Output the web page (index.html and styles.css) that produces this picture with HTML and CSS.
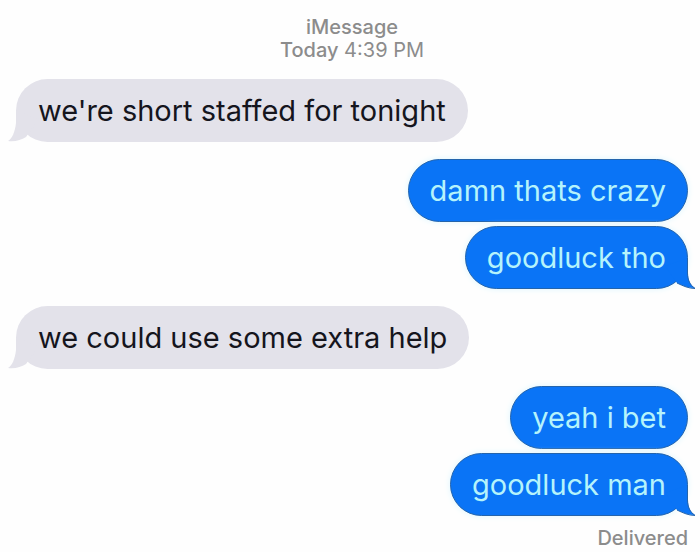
FILE: index.html
```
<!DOCTYPE html>
<html lang="en">
<head>
    <meta charset="UTF-8">
    <meta name="viewport" content="width=device-width, initial-scale=1.0">
    <title>iMessage</title>
    <link rel="stylesheet" href="styles.css">
</head>
<body>
    <main class="chat">
        <header class="chat-header">
            <p class="service">iMessage</p>
            <p><span class="day">Today</span> <time>4:39 PM</time></p>
        </header>

        <div class="group received">
            <p class="bubble">we're short staffed for tonight
                <svg class="tail" viewBox="0 0 40 31" aria-hidden="true">
                    <path class="tail-fill" d="M31 0V12C32 21 35 28 39 30C32 31 26 29 21 26L8 8Z"/>
                </svg>
            </p>
        </div>

        <div class="group sent">
            <p class="bubble">damn thats crazy</p>
            <p class="bubble">goodluck tho
                <svg class="tail" viewBox="0 0 40 31" aria-hidden="true">
                    <path class="tail-fill" d="M31 0V15C31 22 33 27 38 30C32 30 26 28 20 25L8 8Z"/>
                    <path class="tail-line" d="M30.500 0V15C30.500 22 33 27 38 30.500C32 30.500 26 28 20 25"/>
                </svg>
            </p>
        </div>

        <div class="group received">
            <p class="bubble">we could use some extra help
                <svg class="tail" viewBox="0 0 40 31" aria-hidden="true">
                    <path class="tail-fill" d="M31 0V12C32 21 35 28 39 30C32 31 26 29 21 26L8 8Z"/>
                </svg>
            </p>
        </div>

        <div class="group sent">
            <p class="bubble">yeah i bet</p>
            <p class="bubble">goodluck man
                <svg class="tail" viewBox="0 0 40 31" aria-hidden="true">
                    <path class="tail-fill" d="M31 0V15C31 22 33 27 38 30C32 30 26 28 20 25L8 8Z"/>
                    <path class="tail-line" d="M30.500 0V15C30.500 22 33 27 38 30.500C32 30.500 26 28 20 25"/>
                </svg>
            </p>
        </div>

        <p class="status">Delivered</p>
    </main>
</body>
</html>
```
FILE: styles.css
```
* {
    margin: 0;
    padding: 0;
    box-sizing: border-box;
}

body {
    font-family: 'Inter', 'Liberation Sans', sans-serif;
    background: #fefefe;
    color: #15151d;
}

.chat {
    padding: 16px 12px 0 16px;
}

.chat-header {
    margin-bottom: 17px;
    text-align: center;
    font-size: 20px;
    line-height: 23px;
    color: #8c8c8c;
}

.service,
.day {
    font-weight: 500;
}

.group {
    display: flex;
    flex-direction: column;
    gap: 4px;
    margin-bottom: 17px;
}

.received {
    align-items: flex-start;
}

.sent {
    align-items: flex-end;
}

.bubble {
    position: relative;
    padding: 16px 22px;
    border-radius: 32px;
    font-size: 29px;
    line-height: 31px;
}

.received .bubble {
    background: #e3e2ea;
}

.sent .bubble {
    padding: 15px 21px;
    border: 1px solid #2464ac;
    background: #0a74f6;
    color: #b5f3fb;
    box-shadow: 0 0 6px #dcf6ff;
}

/* Tail in the bottom corner of the last bubble */
.tail {
    position: absolute;
    right: -9px;
    bottom: 0;
    width: 40px;
    height: 31px;
}

.sent .tail {
    right: -10px;
    bottom: -1px;
}

.received .tail {
    right: auto;
    left: -9px;
    transform: scaleX(-1);
}

.received .tail-fill {
    fill: #e3e2ea;
}

.sent .tail-fill {
    fill: #0a74f6;
}

.tail-line {
    fill: none;
    stroke: #2464ac;
    stroke-width: 1;
}

.status {
    margin-top: -7px;
    text-align: right;
    font-size: 20px;
    line-height: 24px;
    font-weight: 500;
    color: #8c8c8c;
}
```
